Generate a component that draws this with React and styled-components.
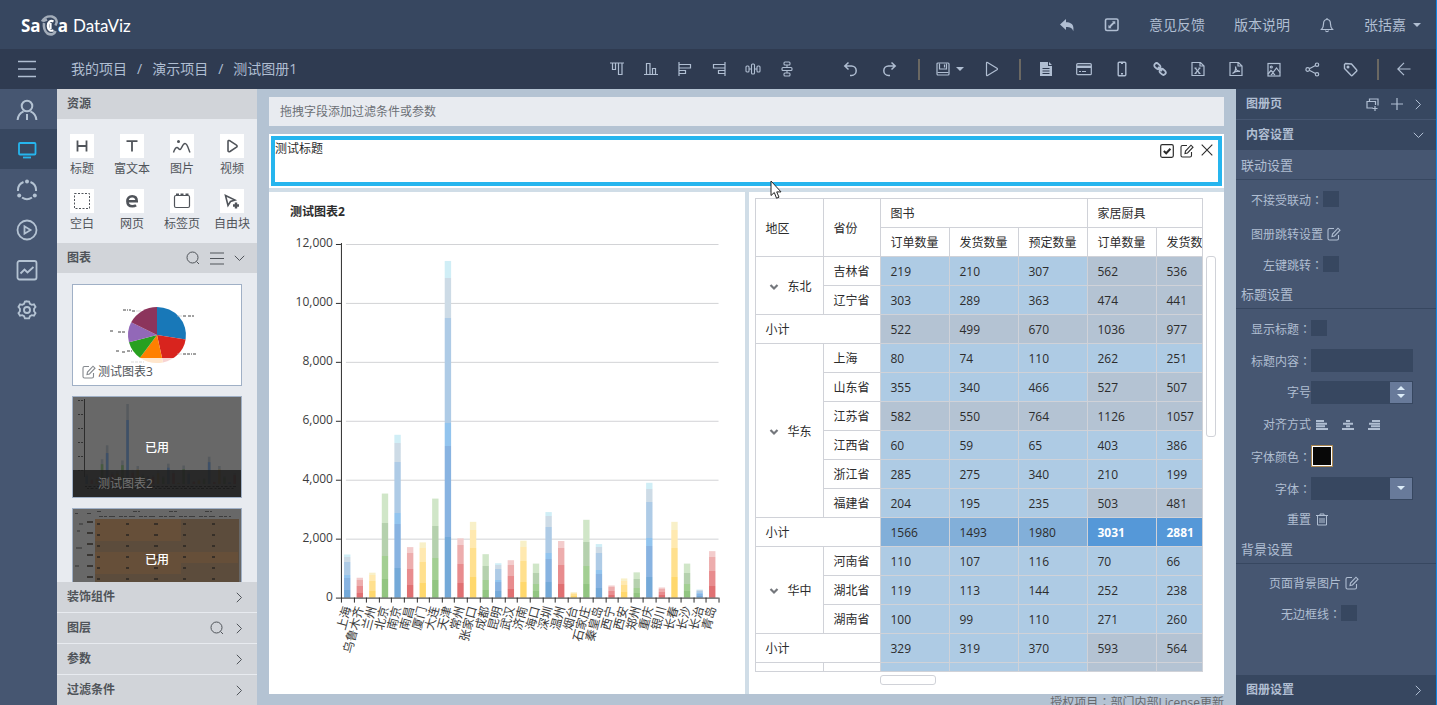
import React from "react";
import styled, { createGlobalStyle } from "styled-components";

const c = {
  bar: "#374760",
  barDark: "#2f3b51",
  panel: "#465671",
  ink: "#b0bed2",
  accent: "#26b5ee",
  canvas: "#b4c3d3",
  head: "#d1d4d9",
  light: "#e8ebf0",
  text: "#50545a",
  line: "#d0d2d8",
};

const Global = createGlobalStyle`
  *, *::before, *::after { box-sizing: border-box; }
  body {
    margin: 0;
    font-family: "Open Sans", "Noto Sans CJK SC", sans-serif;
    font-size: 12px;
    line-height: 16px;
    color: #2c2c2c;
  }
  button, input, select { font: inherit; color: inherit; margin: 0; padding: 0; border: 0; background: none; border-radius: 0; }
  button { display: inline-flex; align-items: center; justify-content: center; cursor: pointer; }
  a { color: inherit; text-decoration: none; }
  h1, h2, h3, p, ul { margin: 0; padding: 0; font: inherit; list-style: none; }
  svg { display: block; flex: none; }
`;

/* ---------- icons ---------- */

const Glyph = ({ w = 16, h = w, vb, sw = 1.2, children, ...rest }) => (
  <svg width={w} height={h} viewBox={vb || `0 0 ${w} ${h}`} fill="none" stroke="currentColor" strokeWidth={sw} aria-hidden="true" {...rest}>
    {children}
  </svg>
);

const icons = {
  menu: <Glyph w={18} sw={1.5}><path d="M0 1.5h18M0 9h18M0 16.5h18" /></Glyph>,
  user: <Glyph w={22} sw={2}><circle cx="11" cy="7" r="5.3" /><path d="M1.600 21c.4-4.600 3-7.400 6-8.600M20.400 21c-.4-4.600-3-7.400-6-8.600M11 15v6" /></Glyph>,
  screen: <Glyph w={20} sw={1.8}><rect x="2" y="3" width="16.500" height="11.500" rx="1" /><path d="M6 17.500h8" /></Glyph>,
  nodes: <Glyph w={22} sw={2}><path d="M7.500 3A9 9 0 0 0 2 12M14.500 3A9 9 0 0 1 20 12M6 18.500a9 9 0 0 0 10 0" /><g fill="currentColor" stroke="none"><circle cx="11" cy="2.500" r="2" /><circle cx="3.200" cy="16.500" r="2" /><circle cx="18.800" cy="16.500" r="2" /></g></Glyph>,
  playRound: <Glyph w={22} sw={1.8}><circle cx="11" cy="11" r="9.500" /><path d="M8.500 7.300v7.400l6-3.700z" /></Glyph>,
  trend: <Glyph w={22} sw={1.8}><rect x="1.500" y="2" width="19" height="18.500" rx="2" /><path d="M4.500 14.500l4-4 3 3 6-5.500" /></Glyph>,
  gear: <Glyph w={22} vb="0 0 24 24" sw={2}><path d="M12 2.500l2.300.4.9 2.300 2 1.100 2.400-.5 1.700 2.900-1.600 1.900v2.800l1.600 1.900-1.700 2.900-2.400-.5-2 1.100-.9 2.300h-4.600l-.9-2.300-2-1.100-2.400.5-1.700-2.900 1.600-1.900v-2.800L2.700 8.700l1.700-2.900 2.400.5 2-1.100.9-2.300z" /><circle cx="12" cy="12" r="3.300" /></Glyph>,
  reply: <Glyph><path d="M7 2v3.200c5.500 0 8.300 2.500 7.300 9-.9-3-2.800-4.300-7.300-4.300V13L1 7.500z" fill="currentColor" stroke="none" /></Glyph>,
  expand: <Glyph sw={1.6}><rect x="1.500" y="2" width="12.500" height="11.500" rx="1.500" /><path d="M5.500 10l4.500-4.500" strokeWidth="1.800" /><path d="M8 4.300h3.300v3.200zM4.400 8v3.200h3.200z" fill="currentColor" stroke="none" /></Glyph>,
  bell: <Glyph><path d="M2.500 12.500c1.500-1.500 2-3 2-5.500 0-2.700 1.500-4.500 3.500-4.500s3.500 1.800 3.500 4.500c0 2.500.5 4 2 5.500zM8 2.500V1M6.500 13.500c.3 1.500 2.700 1.500 3 0" /></Glyph>,
  caret: <Glyph w={8} h={4}><path d="M0 0h8L4 4z" fill="currentColor" stroke="none" /></Glyph>,
  caretUp: <Glyph w={8} h={4}><path d="M0 4h8L4 0z" fill="currentColor" stroke="none" /></Glyph>,
  alignTop: <Glyph w={14}><path d="M0 1h14M2.500 1.500v6h3v-6M8.500 1.500v11h3.500v-11" /></Glyph>,
  alignBottom: <Glyph w={14}><path d="M0 12.500h14M2.500 12V1.500H6V12M8.500 12V6.500h3V12" /></Glyph>,
  alignLeft: <Glyph w={14}><path d="M1 0v14M1.500 2.500h11V6h-11M1.500 8.500h6v3h-6" /></Glyph>,
  alignRight: <Glyph w={14}><path d="M13 0v14M12.500 2.500h-11V6h11M12.500 8.500h-6v3h6" /></Glyph>,
  spreadX: <Glyph w={16} sw={1.1}><rect x="1" y="5" width="3" height="6" rx="1" /><rect x="6.500" y="3" width="3" height="10" rx="1" /><rect x="12" y="5" width="3" height="6" rx="1" /><path d="M4 8h2.500M9.500 8H12" /></Glyph>,
  spreadY: <Glyph w={16} sw={1.1}><rect x="5" y="1" width="6" height="3" rx="1" /><rect x="3" y="6.500" width="10" height="3" rx="1" /><rect x="5" y="12" width="6" height="3" rx="1" /><path d="M8 4v2.500M8 9.500V12" /></Glyph>,
  undo: <Glyph sw={1.5}><path d="M5.500 1.500L1.800 5l3.700 3.500M2 5h6.500a4.700 4.700 0 0 1 0 9.400H7" /></Glyph>,
  redo: <Glyph sw={1.5}><path d="M10.500 1.500L14.200 5l-3.700 3.500M14 5H7.500a4.700 4.700 0 0 0 0 9.400H9" /></Glyph>,
  save: <Glyph w={14}><rect x="1" y="1" width="12" height="12" rx="1" /><path d="M3.500 1.500V7h7V1.500M8.500 2.500v3M1.500 10.500h11" /></Glyph>,
  play: <Glyph w={14} h={16}><path d="M1.500 2v12c0 .8.500.9 1 .6L12 8.800c.6-.4.600-1.200 0-1.600L2.500 1.400c-.5-.3-1-.2-1 .6z" /></Glyph>,
  doc: <Glyph w={14} h={16}><path d="M1 1h8v4h4v10H1zM10 1l3 3h-3z" fill="currentColor" stroke="none" /><path d="M3.500 7.500h7M3.500 10h7M3.500 12.500h7" stroke={c.barDark} /></Glyph>,
  card: <Glyph><rect x=".7" y="2.700" width="14.600" height="11" rx="1" /><path d="M1 5.800h14" strokeWidth="2.400" /><path d="M3 10.500h2M6 10.500h4" /></Glyph>,
  phone: <Glyph w={10} h={16} sw={1.4}><rect x="1.200" y="1.200" width="7.600" height="13.600" rx="1" /><path d="M4 12.700h2M4 2.300h2" /></Glyph>,
  link: <Glyph w={14} sw={1.8}><rect x="1" y="1.800" width="6.600" height="4.600" rx="2.300" transform="rotate(45 4.300 4.100)" /><rect x="6.400" y="7.600" width="6.600" height="4.600" rx="2.300" transform="rotate(45 9.700 9.900)" /><path d="M5 5l4 4" /></Glyph>,
  excel: <Glyph w={14} h={16}><path d="M1 1.500h8.500L13 5v9.500H1zM9 1.500V5h4" /><path d="M4.300 7.200l4.400 5.300M8.700 7.200l-4.400 5.300M3.500 7.200h2M7.500 12.500h2M7.500 7.200h2M3.500 12.500h2" /></Glyph>,
  pdf: <Glyph w={14} h={16}><path d="M1 1.500h8.500L13 5v9.500H1zM9 1.500V5h4" /><path d="M3.500 12.500c2.500-1.500 3.500-4.500 3-7 .3 3.500 2 5 4.500 4.800-2.500-.3-5.300.4-7.500 2.200z" /></Glyph>,
  image: <Glyph w={14} h={15}><rect x="1" y="1.500" width="12" height="12.500" /><circle cx="4.300" cy="5" r="1" /><path d="M1 12l3-3.500 2 2L9.500 6l3.500 4.500M4 13l2-2 2 2" /></Glyph>,
  share: <Glyph w={15}><circle cx="2.700" cy="7.500" r="1.800" /><circle cx="12" cy="2.700" r="1.700" /><circle cx="12" cy="12.300" r="1.700" /><path d="M4.300 6.700l6.200-3.200M4.300 8.300l6.200 3.200" /></Glyph>,
  tag: <Glyph w={15} sw={1.4}><path d="M1.500 2.500v4L8 13.300c.5.5 1 .5 1.500 0l4-4c.5-.5.5-1 0-1.500L8.500 2 2.500 1.500z" /><circle cx="5" cy="5" r=".8" /></Glyph>,
  back: <Glyph w={14}><path d="M13.500 7H1M7 .8L.8 7 7 13.200" /></Glyph>,
  search: <Glyph w={14} sw={1}><circle cx="6.500" cy="6.500" r="5.500" /><path d="M10.500 10.500l2.500 2.500" /></Glyph>,
  lines: <Glyph w={14} h={13} sw={1.1}><path d="M0 1h14M0 6.500h14M0 12h14" /></Glyph>,
  down: <Glyph w={11} h={7} sw={1}><path d="M.8.8l4.700 4.700L10.200.8" /></Glyph>,
  right: <Glyph w={7} h={11} sw={1}><path d="M.8.8l4.700 4.700-4.700 4.700" /></Glyph>,
  pages: <Glyph w={13} sw={1.2}><path d="M3.500 3V1h8.500v6.500M7 10H1V3.500h8.500V7M9 8v5M6.500 10.500h5" /></Glyph>,
  plus: <Glyph w={12} sw={1.2}><path d="M6 0v12M0 6h12" /></Glyph>,
  edit: <Glyph w={14} sw={1.1}><path d="M7 1.500H2.500C1.500 1.500 1 2 1 3v8.500c0 1 .5 1.500 1.500 1.500H10c1 0 1.500-.5 1.500-1.500V8M5 9.500l.5-2.500L11 1.200l2 2L7.500 9z" /></Glyph>,
  checkBox: <Glyph w={14} sw={1.2}><rect x=".7" y=".7" width="12.600" height="12.600" rx="1.500" /><path d="M3.800 7l2.400 2.300 4.200-4.500" strokeWidth="2" /></Glyph>,
  close: <Glyph w={12} sw={1.1}><path d="M.7.7l10.600 10.600M11.300.7L.7 11.300" /></Glyph>,
  trash: <Glyph w={12} h={13} sw={1}><path d="M0 2.500h12M4 2.500V1h4v1.500M1.500 2.500V12h9V2.500M4 5v5M6 5v5M8 5v5" /></Glyph>,
  textLeft: <Glyph w={12} h={10} sw={2}><path d="M0 1h8M0 3.700h11M0 6.300h9M0 9h12" /></Glyph>,
  textCenter: <Glyph w={12} h={10} sw={2}><path d="M4 1h4M1 3.700h10M4 6.300h4M0 9h12" /></Glyph>,
  textRight: <Glyph w={12} h={10} sw={2}><path d="M4 1h8M1 3.700h11M3 6.300h9M0 9h12" /></Glyph>,
  heading: <Glyph w={24} sw={1.8}><path d="M7.500 6.500v11M16.500 6.500v11M7.500 12h9" /></Glyph>,
  rich: <Glyph w={24} sw={1.8}><path d="M6.500 7.200h11M12 7v10.500" /></Glyph>,
  picture: <Glyph w={24} sw={1.4}><circle cx="8.500" cy="7.500" r="1.500" fill="currentColor" stroke="none" /><path d="M3.500 18.500c1-3 2-5 3.500-5s1.500 2 3 2 2.500-6 5-6 3.500 6 5 9" /></Glyph>,
  video: <Glyph w={24} sw={1.6}><path d="M8 7.500v9c0 1.200 1 1.500 2 1l6.500-4.300c.8-.6.8-1.500 0-2L10 6.800c-1-.6-2-.3-2 .7z" /></Glyph>,
  blank: <Glyph w={24} sw={1}><rect x="4.500" y="4.500" width="15" height="15" strokeDasharray="2 1.500" /></Glyph>,
  web: <Glyph w={24} sw={2.6}><path d="M7.500 12.200h9.200c0-3.200-1.700-5-4.500-5-2.900 0-4.800 2-4.800 5 0 3.200 2 5.100 5 5.100 1.500 0 2.700-.3 3.700-1" /></Glyph>,
  tabs: <Glyph w={24} sw={1.2}><rect x="4.500" y="6.500" width="15" height="12" rx="1.500" /><path d="M6 5.500h3M10.500 5.500h3M15.500 5.500h3" strokeWidth="2" /></Glyph>,
  free: <Glyph w={24} sw={1.6}><path d="M5.500 6.500l2.500 10 2.500-4 4.500-1.500z" /><path d="M16 13.500v6M13 16.500h6" strokeWidth="2.400" /></Glyph>,
  fold: <Glyph w={10} h={7} sw={2.2}><path d="M1.500 1l3.500 3.500L8.500 1" /></Glyph>,
};

/* ---------- page frame ---------- */

const Page = styled.div`
  display: flex;
  flex-direction: column;
  height: 100vh;
  overflow: hidden;
  border-right: 1px solid #1186e0;
`;
const TopBar = styled.header`
  display: flex;
  align-items: center;
  justify-content: space-between;
  flex: none;
  height: 49px;
  padding: 0 15px 0 21px;
  background: ${c.bar};
  color: ${c.ink};
  font-size: 14px;
`;
const Logo = styled.h1`
  display: flex;
  align-items: center;
  color: #fff;
  font-family: Lato, sans-serif;
  font-size: 17px;
  line-height: 24px;
  padding-top: 3px;
`;
const LogoStrong = styled.span`
  font-family: "Open Sans", sans-serif;
  font-weight: 700;
`;
const LogoName = styled.span`
  margin-left: 5px;
`;
const TopLinks = styled.nav`
  display: flex;
  align-items: center;
  gap: 29px;
`;
const UserButton = styled.button`
  gap: 7px;
`;
const ToolBar = styled.div`
  display: flex;
  align-items: center;
  flex: none;
  height: 40px;
  padding: 0 13px 0 18px;
  background: ${c.barDark};
  color: ${c.ink};
`;
const Crumbs = styled.nav`
  display: flex;
  gap: 10px;
  margin: 0 auto 0 35px;
  font-size: 14px;
`;
const Tools = styled.div`
  display: flex;
  margin-right: ${(p) => p.$after || 0}px;
`;
const Tool = styled.button`
  gap: 6px;
  width: ${(p) => p.$w || 38}px;
  height: 30px;
`;
const Divider = styled.span`
  width: 2px;
  height: 21px;
  margin: 0 6px 0 8px;
  background: #6b6862;
`;
const Body = styled.div`
  display: flex;
  flex: 1;
  min-height: 0;
`;

const NavRail = styled.nav`
  display: flex;
  flex-direction: column;
  flex: none;
  width: 57px;
  background: ${c.panel};
`;
const NavItem = styled.button`
  height: 40px;
  padding: 2px 3px 0 0;
  color: ${(p) => (p.$on ? c.accent : c.canvas)};
  background: ${(p) => (p.$on ? c.bar : "transparent")};
`;

/* ---------- resource panel ---------- */

const Resources = styled.aside`
  display: flex;
  flex-direction: column;
  flex: none;
  width: 200px;
  background: ${c.light};
  color: ${c.text};
`;
const PanelHead = styled.div`
  display: flex;
  align-items: center;
  gap: ${(p) => p.$gap || 10}px;
  flex: none;
  height: 30px;
  padding: 0 ${(p) => p.$end || 14}px 0 10px;
  border: 0 solid ${(p) => (p.$dark ? c.panel : c.light)};
  background: ${(p) => (p.$dark ? c.bar : c.head)};
  color: ${(p) => (p.$dark ? c.ink : c.text)};
  & + & { height: 31px; border-top-width: 1px; }
`;
const PanelTitle = styled.h2`
  margin-right: auto;
  font-weight: 600;
`;
const Widgets = styled.div`
  display: grid;
  grid-template-columns: repeat(4, 1fr);
  row-gap: 12px;
  padding: 15px 0 11px;
`;
const Widget = styled.button`
  flex-direction: column;
  gap: 3px;
  white-space: nowrap;
`;
const WidgetIcon = styled.span`
  background: #fff;
`;
const ChartList = styled.div`
  display: flex;
  flex-direction: column;
  gap: 10px;
  flex: 1;
  min-height: 0;
  padding: 11px 15px 0;
  overflow: hidden;
`;
const ChartCard = styled.article`
  position: relative;
  flex: none;
  height: 102px;
  border: 1px solid #a0b0c6;
  background: ${(p) => (p.$used ? "#686868" : "#fff")};
`;
const CardCaption = styled.div`
  position: absolute;
  left: 0;
  right: 0;
  bottom: 0;
  display: flex;
  align-items: center;
  gap: 2px;
  height: 27px;
  padding: 0 0 0 ${(p) => (p.$used ? 25 : 9)}px;
  background: ${(p) => (p.$used ? "rgba(30,30,30,.85)" : "rgba(255,255,255,.8)")};
  color: ${(p) => (p.$used ? "#747474" : "#50545a")};
  svg { color: #85898e; }
`;
const UsedMark = styled.strong`
  position: absolute;
  inset: 0;
  display: flex;
  align-items: center;
  justify-content: center;
  padding-top: 2px;
  color: #fff;
  font-weight: 500;
`;

/* ---------- canvas ---------- */

const Canvas = styled.main`
  position: relative;
  display: flex;
  flex-direction: column;
  flex: 1;
  min-width: 0;
  padding: 8px 12px 0;
  background: ${c.canvas};
`;
const FilterBar = styled.div`
  flex: none;
  height: 29px;
  margin-bottom: 8px;
  padding: 7px 11px;
  background: ${c.light};
  color: #6c7076;
`;
const TitleBlock = styled.section`
  flex: none;
  height: 54px;
  padding: 2px;
  background: #fff;
`;
const TitleFrame = styled.div`
  display: flex;
  justify-content: space-between;
  height: 50px;
  padding-top: 1px;
  border: 4px solid ${c.accent};
`;
const TitleTools = styled.div`
  display: flex;
  align-items: flex-start;
  gap: 6px;
  padding: 3px 5px 0 0;
`;
const Board = styled.div`
  display: flex;
  gap: 4px;
  flex: 1;
  min-height: 0;
  padding-top: 4px;
  background: #d0dde7;
`;
const Tile = styled.section`
  flex: 1 1 0;
  min-width: 0;
  background: #fff;
  overflow: hidden;
`;
const TileTitle = styled.h2`
  padding: 12px 21px 10px;
  font-weight: 700;
`;
const ChartSvg = styled.svg`
  width: 100%;
  height: auto;
`;
const License = styled.p`
  flex: none;
  height: 11px;
  text-align: right;
  line-height: 16px;
  white-space: nowrap;
  color: #66696e;
`;
const Colon = styled.span.attrs({ children: "：" })`
  font-family: "Noto Sans CJK TC", sans-serif;
`;
const Cursor = styled.div`
  position: absolute;
  left: 513px;
  top: 91px;
`;

const GridArea = styled.div`
  display: grid;
  grid-template-columns: 1fr 10px;
  grid-template-rows: 1fr 10px;
  gap: 3px;
  height: 100%;
  padding: 6px 8px 9px 6px;
`;
const GridClip = styled.div`
  min-height: 0;
  min-width: 0;
  overflow: hidden;
  border: 1px solid ${c.line};
`;
const Grid = styled.table`
  table-layout: fixed;
  width: 470px;
  border-collapse: separate;
  border-spacing: 0;
`;
const cellFill = {
  base: "#aecbe4",
  mid: "#b4c3d3",
  high: "#82afd9",
  top: "#5598d8",
  none: "#fff",
};
const Cell = styled.td`
  height: 29px;
  padding: 2px 0 0 10px;
  border: solid ${c.line};
  border-width: 0 1px 1px 0;
  text-align: left;
  white-space: nowrap;
  background: ${(p) => cellFill[p.$level || "none"]};
  color: ${(p) => (p.$level === "top" ? "#fff" : "#2c2c2c")};
  font-weight: ${(p) => (p.$level === "top" ? 700 : 400)};
`;
const Fold = styled.button`
  width: 16px;
  margin-right: 6px;
  color: #74777c;
  vertical-align: middle;
`;
const Thumb = styled.div`
  width: ${(p) => p.$w}px;
  height: ${(p) => p.$h}px;
  margin: ${(p) => p.$m};
  border: 1px solid ${c.line};
  border-radius: 3px;
`;

/* ---------- settings panel ---------- */

const Settings = styled.aside`
  display: flex;
  flex-direction: column;
  flex: none;
  width: 200px;
  background: ${c.panel};
  color: ${c.ink};
`;
const SectionTitle = styled.h3`
  height: 30px;
  padding: 7px 5px 6px;
  border-bottom: 1px solid ${c.bar};
  font-size: 13px;
`;
const Rows = styled.div`
  padding-top: ${(p) => p.$top}px;
`;
const Row = styled.div`
  display: grid;
  grid-template-columns: ${(p) => p.$label}px 1fr;
  align-items: center;
  height: ${(p) => p.$h || 30}px;
  margin-top: ${(p) => (p.$apart ? 5 : 0)}px;
`;
const Label = styled.label`
  padding-top: 2px;
  text-align: right;
  white-space: nowrap;
`;
const Tick = styled.input`
  appearance: none;
  width: 16px;
  height: 16px;
  background: ${c.bar};
`;
const Field = styled.div`
  display: flex;
  width: 102px;
  height: 23px;
  border: 1px solid ${c.bar};
  background: ${c.bar};
`;
const FieldInput = styled.input`
  flex: 1;
  min-width: 0;
`;
const FieldSelect = styled.select`
  appearance: none;
  flex: 1;
  min-width: 0;
`;
const FieldEnd = styled.span`
  display: flex;
  flex-direction: column;
  align-items: center;
  justify-content: center;
  gap: 4px;
  width: 22px;
  background: #687a9a;
  color: #dcecf8;
`;
const IconButton = styled.button`
  justify-self: start;
  margin-left: ${(p) => p.$left || 0}px;
`;
const AlignGroup = styled.div`
  display: flex;
  gap: 14px;
  padding: 2px 0 0 5px;
`;
const ColorInput = styled.input`
  appearance: none;
  width: 22px;
  height: 22px;
  border: 1px solid #a8854f;
  &::-webkit-color-swatch-wrapper { padding: 0; }
  &::-webkit-color-swatch { border: 1px solid #fff; border-radius: 0; }
`;
const Spacer = styled.div`
  flex: 1;
`;

/* ---------- data ---------- */

const cities = [
  ["上海", 1463], ["乌鲁木齐", 674], ["兰州", 846], ["北京", 3531], ["南京", 5525], ["南昌", 1714],
  ["厦门", 1874], ["大连", 3360], ["天津", 11424], ["常州", 2011], ["张家口", 2571], ["成都", 1474],
  ["昆明", 1166], ["武汉", 1269], ["济南", 1931], ["海口", 1154], ["深圳", 2903], ["温州", 1920],
  ["烟台", 183], ["石家庄", 2640], ["秦皇岛", 1817], ["西宁", 411], ["西安", 651], ["郑州", 857],
  ["重庆", 3897], ["银川", 343], ["长春", 2571], ["长沙", 1154], ["长治", 274], ["青岛", 1577],
];

const ramps = [
  [[0, "#d0eef6"], [5, "#cddbe6"], [17, "#aecbe6"], [48, "#92c4ee"], [55, "#88b3e1"], [82, "#74a9d8"]],
  [[0, "#f3cccc"], [12, "#edadad"], [43, "#e88c8e"], [76, "#e07072"]],
  [[0, "#f8f0c8"], [11, "#ffe9b0"], [35, "#ffe08e"], [73, "#ffd86c"]],
  [[0, "#d0e6c8"], [28, "#b5d1ae"], [60, "#a3cf93"], [82, "#92c581"]],
];

const regions = [
  { name: "东北", rows: [["吉林省", 219, 210, 307, 562, 536], ["辽宁省", 303, 289, 363, 474, 441]], total: [522, 499, 670, 1036, 977] },
  {
    name: "华东",
    rows: [
      ["上海", 80, 74, 110, 262, 251], ["山东省", 355, 340, 466, 527, 507], ["江苏省", 582, 550, 764, 1126, 1057],
      ["江西省", 60, 59, 65, 403, 386], ["浙江省", 285, 275, 340, 210, 199], ["福建省", 204, 195, 235, 503, 481],
    ],
    total: [1566, 1493, 1980, 3031, 2881],
  },
  { name: "华中", rows: [["河南省", 110, 107, 116, 70, 66], ["湖北省", 119, 113, 144, 252, 238], ["湖南省", 100, 99, 110, 271, 260]], total: [329, 319, 370, 593, 564] },
];

const levelOf = (v, col) => {
  if (v > 2500) return "top";
  if (v > 1400) return "high";
  return v >= (col === 4 ? 440 : 470) ? "mid" : "base";
};

/* ---------- drawings ---------- */

function BarChart() {
  const x0 = 72, base = 368, step = 12.6;
  const y = (v) => base - (v / 2000) * 59;
  return (
    <ChartSvg viewBox="0 0 476 440" role="img" aria-label="测试图表2">
      <defs>
        {ramps.map((stops, i) => (
          <linearGradient key={i} id={`ramp${i}`} x1="0" y1="0" x2="0" y2="1">
            {stops.map(([at, col], k) => (
              <React.Fragment key={k}>
                <stop offset={`${at}%`} stopColor={col} />
                <stop offset={`${stops[k + 1] ? stops[k + 1][0] : 100}%`} stopColor={col} />
              </React.Fragment>
            ))}
          </linearGradient>
        ))}
      </defs>
      {[0, 2000, 4000, 6000, 8000, 10000, 12000].map((v) => (
        <g key={v}>
          {v > 0 && <path d={`M${x0 + 5} ${y(v) + 0.5}H450`} stroke="#d2d3d6" />}
          <path d={`M${x0 - 5} ${y(v) + 0.5}h5`} stroke="#2c2c2c" />
          <text x={x0 - 8} y={y(v) + 3} textAnchor="end" fontSize="12" fill="#3c3c3c">{v.toLocaleString("en-US")}</text>
        </g>
      ))}
      {cities.map(([name, v], i) => {
        const mid = x0 + step * (i + 0.5);
        return (
          <g key={name}>
            <rect x={mid - 3.2} y={y(v)} width="6.400" height={base - y(v)} fill={`url(#ramp${i % 4})`} />
            <path d={`M${Math.round(x0 + step * (i + 1)) + 0.5} ${base}v5`} stroke="#2c2c2c" />
            <text transform={`translate(${mid} ${base + 9}) rotate(-75)`} textAnchor="end" dy="4" fontSize="12" fill="#3c3c3c">{name}</text>
          </g>
        );
      })}
      <path d={`M${x0 + 0.5} 13V${base + 5}M${x0} ${base + 0.5}H450`} stroke="#2c2c2c" fill="none" />
    </ChartSvg>
  );
}

const slices = [
  [0, 99, "#1878b8"], [99, 168, "#d8241e"], [168, 216, "#ff8000"],
  [216, 255, "#28a020"], [255, 297, "#9268b8"], [297, 360, "#8c345c"],
];
function PieThumb() {
  const pt = (a) => {
    const t = (a * Math.PI) / 180;
    return `${84 + 29 * Math.sin(t)} ${50 - 28 * Math.cos(t)}`;
  };
  return (
    <svg width="168" height="100" viewBox="0 0 168 100" aria-hidden="true">
      {slices.map(([a, b, fill]) => (
        <path key={a} d={`M84 50L${pt(a)}A29 28 0 0 1 ${pt(b)}z`} fill={fill} />
      ))}
      <path d="M50 25h5m1 0h2m1 1h4M37 46h4m4 1h8M43 66h4m2 1h3m2-1h5M110 31h4m1 0h6M110 69h3m1 0h5m1 0h3M58 77h13" stroke="#444" strokeDasharray="3 1" />
      <path d="M63 26h5M104 31h5M104 69h5" stroke="#bbb" strokeWidth=".6" />
    </svg>
  );
}

const dim = ["#3e5068", "#6a3c3c", "#6e5a34", "#465a40"];
function BarThumb() {
  return (
    <svg width="168" height="100" viewBox="0 0 168 100" aria-hidden="true">
      <path d="M11.500 2v78" stroke="#2c2c2c" />
      <path d="M5 3.500h5M5 17.500h5M5 31.500h5M5 45.500h5M5 59.500h5M5 73.500h5" stroke="#333" strokeDasharray="2 1" />
      {cities.map(([name, v], i) => {
        const h = v * 0.007;
        return (
          <g key={name}>
            <rect x={12.5 + i * 5.1} y={87 - h} width="2.500" height={h} fill="#565a5e" />
            <rect x={12.5 + i * 5.1} y={87 - h * 0.8} width="2.500" height={h * 0.8} fill={dim[i % 4]} />
          </g>
        );
      })}
      <path d="M12 89.500h152M14 91.500h148" stroke="#161616" strokeDasharray="2 1.500 3 2" />
    </svg>
  );
}

function TableThumb() {
  const ys = [15, 26, 37, 48, 59, 70, 81];
  return (
    <svg width="168" height="100" viewBox="0 0 168 100" aria-hidden="true">
      <rect x="22" y="10" width="144" height="90" fill="#5c4c3c" />
      <path d="M22 10h86v22H22zM22 43h143v11H22zM22 54h86v11H22z" fill="#664f39" />
      <path d="M2 4.500h3M14 4.500h5M24 2.500h5M60 2.500h7M96 2.500h8M132 2.500h7M26 7.500h132" stroke="#3c3c3c" strokeDasharray="4 1 3 2 6 4" />
      {ys.map((y) => (
        <path key={y} d={`M14 ${y - 2}h6M24 ${y}h3M53 ${y}h3M81 ${y}h4M110 ${y}h3M139 ${y}h3`} stroke="#2a2622" strokeWidth="1.300" />
      ))}
      <path d="M6 15h4M4 22h3M3 39h6M2 57h4" stroke="#333" />
    </svg>
  );
}

function LogoSwirl() {
  return (
    <svg width="17" height="22" viewBox="0 0 17 22" aria-hidden="true">
      <path d="M1 6.500C3 2.500 7 1 11 1.500c3 .8 4.500 3 4.800 5.500l-1.300 3.500" fill="none" stroke="#a3adba" strokeWidth="2.400" />
      <path d="M3 8c-.5 4 .5 8 3.500 10.500 3.500 1.800 7 .8 8-2.500M2 6l4-1.500" fill="none" stroke="#a3adba" strokeWidth="2.600" />
      <path d="M12.500 6.500C9.500 5 6.800 7 6.800 11c0 3.800 2.700 5.600 5.700 4.300M9.500 8v6" fill="none" stroke="#fff" strokeWidth="2.200" />
    </svg>
  );
}

function PivotTable() {
  return (
    <Grid>
      <colgroup>
        <col width="68" />
        <col width="57" />
        {[0, 1, 2, 3, 4].map((i) => <col key={i} width="69" />)}
      </colgroup>
      <thead>
        <tr>
          <Cell as="th" rowSpan={2}>地区</Cell>
          <Cell as="th" rowSpan={2}>省份</Cell>
          <Cell as="th" colSpan={3}>图书</Cell>
          <Cell as="th" colSpan={2}>家居厨具</Cell>
        </tr>
        <tr>
          {["订单数量", "发货数量", "预定数量", "订单数量", "发货数量"].map((t, i) => <Cell as="th" key={i}>{t}</Cell>)}
        </tr>
      </thead>
      <tbody>
        {regions.map((r) => (
          <React.Fragment key={r.name}>
            {r.rows.map(([name, ...vals], i) => (
              <tr key={name}>
                {i === 0 && (
                  <Cell as="th" rowSpan={r.rows.length}>
                    <Fold type="button" aria-label={`收起${r.name}`}>{icons.fold}</Fold>{r.name}
                  </Cell>
                )}
                <Cell as="th">{name}</Cell>
                {vals.map((v, k) => <Cell key={k} $level={levelOf(v, k)}>{v}</Cell>)}
              </tr>
            ))}
            <tr>
              <Cell as="th" colSpan={2}>小计</Cell>
              {r.total.map((v, k) => <Cell key={k} $level={levelOf(v, k)}>{v}</Cell>)}
            </tr>
          </React.Fragment>
        ))}
        <tr>
          <Cell /><Cell />
          {["base", "base", "base", "mid", "mid"].map((l, k) => <Cell key={k} $level={l} />)}
        </tr>
      </tbody>
    </Grid>
  );
}

/* ---------- app ---------- */

const navItems = [["user", "用户"], ["screen", "图册"], ["nodes", "数据"], ["playRound", "播放"], ["trend", "分析"], ["gear", "设置"]];
const widgets = [
  ["heading", "标题"], ["rich", "富文本"], ["picture", "图片"], ["video", "视频"],
  ["blank", "空白"], ["web", "网页"], ["tabs", "标签页"], ["free", "自由块"],
];
const alignTools = ["alignTop", "alignBottom", "alignLeft", "alignRight", "spreadX", "spreadY"];
const exportTools = ["doc", "card", "phone", "link", "excel", "pdf", "image", "share", "tag"];

export default function App() {
  return (
    <Page>
      <Global />
      <TopBar>
        <Logo>
          <LogoStrong>Sa</LogoStrong>
          <LogoSwirl />
          <LogoStrong>a</LogoStrong>
          <LogoName>DataViz</LogoName>
        </Logo>
        <TopLinks>
          <button type="button" aria-label="返回">{icons.reply}</button>
          <button type="button" aria-label="全屏">{icons.expand}</button>
          <a href="#feedback">意见反馈</a>
          <a href="#version">版本说明</a>
          <button type="button" aria-label="通知">{icons.bell}</button>
          <UserButton type="button">张括嘉{icons.caret}</UserButton>
        </TopLinks>
      </TopBar>

      <ToolBar>
        <button type="button" aria-label="菜单">{icons.menu}</button>
        <Crumbs>
          <a href="#projects">我的项目</a><span>/</span><a href="#demo">演示项目</a><span>/</span><a href="#album">测试图册1</a>
        </Crumbs>
        <Tools $after={28}>
          {alignTools.map((n) => <Tool key={n} $w={34} type="button" aria-label={n}>{icons[n]}</Tool>)}
        </Tools>
        <Tools $after={2}>
          <Tool type="button" aria-label="撤销">{icons.undo}</Tool>
          <Tool type="button" aria-label="重做">{icons.redo}</Tool>
        </Tools>
        <Divider />
        <Tools>
          <Tool $w={47} type="button" aria-label="保存">{icons.save}{icons.caret}</Tool>
          <Tool type="button" aria-label="预览">{icons.play}</Tool>
        </Tools>
        <Divider />
        <Tools>
          {exportTools.map((n) => <Tool key={n} type="button" aria-label={n}>{icons[n]}</Tool>)}
        </Tools>
        <Divider />
        <Tool type="button" aria-label="返回">{icons.back}</Tool>
      </ToolBar>

      <Body>
        <NavRail>
          {navItems.map(([n, label]) => (
            <NavItem key={n} type="button" aria-label={label} $on={n === "screen"}>{icons[n]}</NavItem>
          ))}
        </NavRail>

        <Resources>
          <PanelHead><PanelTitle>资源</PanelTitle></PanelHead>
          <Widgets>
            {widgets.map(([n, label]) => (
              <Widget key={n} type="button"><WidgetIcon>{icons[n]}</WidgetIcon>{label}</Widget>
            ))}
          </Widgets>
          <PanelHead $end={12} $gap={10}>
            <PanelTitle>图表</PanelTitle>
            <button type="button" aria-label="搜索">{icons.search}</button>
            <button type="button" aria-label="列表">{icons.lines}</button>
            <button type="button" aria-label="收起">{icons.down}</button>
          </PanelHead>
          <ChartList>
            <ChartCard>
              <PieThumb />
              <CardCaption>{icons.edit}测试图表3</CardCaption>
            </ChartCard>
            <ChartCard $used>
              <BarThumb />
              <CardCaption $used>测试图表2</CardCaption>
              <UsedMark>已用</UsedMark>
            </ChartCard>
            <ChartCard $used>
              <TableThumb />
              <UsedMark>已用</UsedMark>
            </ChartCard>
          </ChartList>
          <PanelHead><PanelTitle>装饰组件</PanelTitle><button type="button" aria-label="展开装饰组件">{icons.right}</button></PanelHead>
          <PanelHead $gap={12}>
            <PanelTitle>图层</PanelTitle>
            <button type="button" aria-label="搜索图层">{icons.search}</button>
            <button type="button" aria-label="展开图层">{icons.right}</button>
          </PanelHead>
          <PanelHead><PanelTitle>参数</PanelTitle><button type="button" aria-label="展开参数">{icons.right}</button></PanelHead>
          <PanelHead><PanelTitle>过滤条件</PanelTitle><button type="button" aria-label="展开过滤条件">{icons.right}</button></PanelHead>
        </Resources>

        <Canvas>
          <FilterBar>拖拽字段添加过滤条件或参数</FilterBar>
          <TitleBlock>
            <TitleFrame>
              测试标题
              <TitleTools>
                <button type="button" aria-label="选中">{icons.checkBox}</button>
                <button type="button" aria-label="编辑">{icons.edit}</button>
                <IconButton type="button" aria-label="删除" $left={1}>{icons.close}</IconButton>
              </TitleTools>
            </TitleFrame>
          </TitleBlock>
          <Board>
            <Tile>
              <TileTitle>测试图表2</TileTitle>
              <BarChart />
            </Tile>
            <Tile>
              <GridArea>
                <GridClip><PivotTable /></GridClip>
                <Thumb $w={10} $h={181} $m="58px 0 0" />
                <Thumb $w={56} $h={10} $m="0 0 0 125px" />
              </GridArea>
            </Tile>
          </Board>
          <License>授权项目<Colon />部门内部License更新</License>
          <Cursor>
            <svg width="13" height="20" viewBox="0 0 13 20" aria-hidden="true">
              <path d="M1 1v14.500l3.300-3 2.200 5.700 2.500-1-2.300-5.300H11z" fill="#fff" stroke="#222" />
            </svg>
          </Cursor>
        </Canvas>

        <Settings>
          <PanelHead $dark $gap={12}>
            <PanelTitle>图册页</PanelTitle>
            <button type="button" aria-label="复制页">{icons.pages}</button>
            <button type="button" aria-label="新增页">{icons.plus}</button>
            <button type="button" aria-label="展开图册页">{icons.right}</button>
          </PanelHead>
          <PanelHead $dark $end={12}>
            <PanelTitle>内容设置</PanelTitle>
            <button type="button" aria-label="收起内容设置">{icons.down}</button>
          </PanelHead>

          <SectionTitle>联动设置</SectionTitle>
          <Rows $top={4}>
            <Row $label={87}><Label htmlFor="noLink">不接受联动<Colon /></Label><Tick id="noLink" type="checkbox" /></Row>
            <Row $label={87} $apart><Label as="span">图册跳转设置</Label><IconButton $left={4} type="button" aria-label="编辑跳转">{icons.edit}</IconButton></Row>
            <Row $label={87}><Label htmlFor="leftJump">左键跳转<Colon /></Label><Tick id="leftJump" type="checkbox" /></Row>
          </Rows>

          <SectionTitle>标题设置</SectionTitle>
          <Rows $top={3}>
            <Row $label={75} $h={32}><Label htmlFor="showTitle">显示标题<Colon /></Label><Tick id="showTitle" type="checkbox" /></Row>
            <Row $label={75} $h={32}><Label htmlFor="titleText">标题内容<Colon /></Label><Field><FieldInput id="titleText" type="text" /></Field></Row>
            <Row $label={75} $h={32}>
              <Label htmlFor="size">字号</Label>
              <Field>
                <FieldInput id="size" type="text" />
                <FieldEnd>
                  <button type="button" aria-label="增大">{icons.caretUp}</button>
                  <button type="button" aria-label="减小">{icons.caret}</button>
                </FieldEnd>
              </Field>
            </Row>
            <Row $label={75} $h={32}>
              <Label as="span">对齐方式</Label>
              <AlignGroup>
                <button type="button" aria-label="左对齐">{icons.textLeft}</button>
                <button type="button" aria-label="居中">{icons.textCenter}</button>
                <button type="button" aria-label="右对齐">{icons.textRight}</button>
              </AlignGroup>
            </Row>
            <Row $label={75} $h={32}><Label htmlFor="color">字体颜色<Colon /></Label><ColorInput id="color" type="color" defaultValue="#080808" /></Row>
            <Row $label={75} $h={32}>
              <Label htmlFor="face">字体<Colon /></Label>
              <Field>
                <FieldSelect id="face" defaultValue=""><option value="" /></FieldSelect>
                <FieldEnd>{icons.caret}</FieldEnd>
              </Field>
            </Row>
            <Row $label={75}><Label as="span">重置</Label><IconButton $left={5} type="button" aria-label="重置">{icons.trash}</IconButton></Row>
          </Rows>

          <SectionTitle>背景设置</SectionTitle>
          <Rows $top={4}>
            <Row $label={105}><Label as="span">页面背景图片</Label><IconButton $left={4} type="button" aria-label="编辑背景">{icons.edit}</IconButton></Row>
            <Row $label={105}><Label htmlFor="noBorder">无边框线<Colon /></Label><Tick id="noBorder" type="checkbox" /></Row>
          </Rows>
          <Spacer />
          <PanelHead $dark><PanelTitle>图册设置</PanelTitle><button type="button" aria-label="展开图册设置">{icons.right}</button></PanelHead>
        </Settings>
      </Body>
    </Page>
  );
}
